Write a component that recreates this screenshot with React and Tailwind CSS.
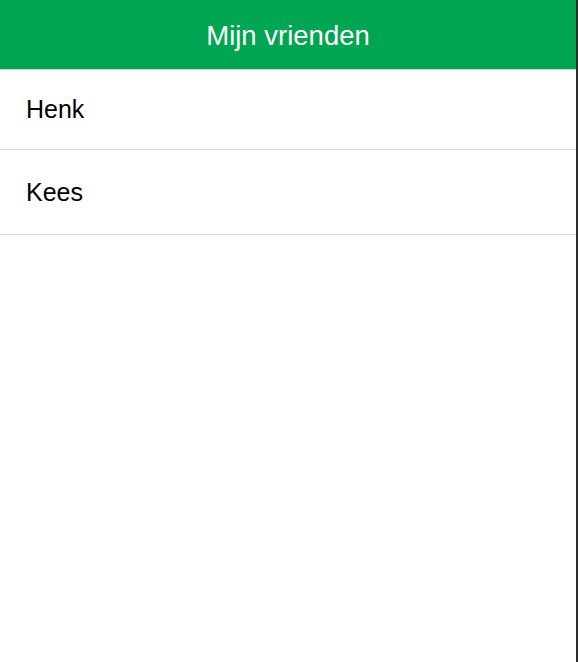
import React from 'react';

const friends = ['Henk', 'Kees'];

export default function App() {
  return (
    <div className="flex h-[662px] w-full bg-white" style={{ fontFamily: '"Liberation Sans", Arial, sans-serif' }}>
      <div className="flex-1 flex flex-col">
        <header className="h-[70px] bg-[#00a551] border-b border-[#d4d4d4] flex items-center justify-center pt-[2px]">
          <h1 className="text-white text-[27.5px] leading-none">Mijn vrienden</h1>
        </header>
        <ul>
          {friends.map((name, i) => (
            <li
              key={name}
              className={`${i === 0 ? 'h-[80px]' : 'h-[85px] pt-[2px]'} border-b border-[#d9d9d9] flex items-center px-[26px] text-[25px] text-black`}
            >
              {name}
            </li>
          ))}
        </ul>
      </div>
      <div className="w-[2px] bg-[#2e2e2e]" />
    </div>
  );
}
